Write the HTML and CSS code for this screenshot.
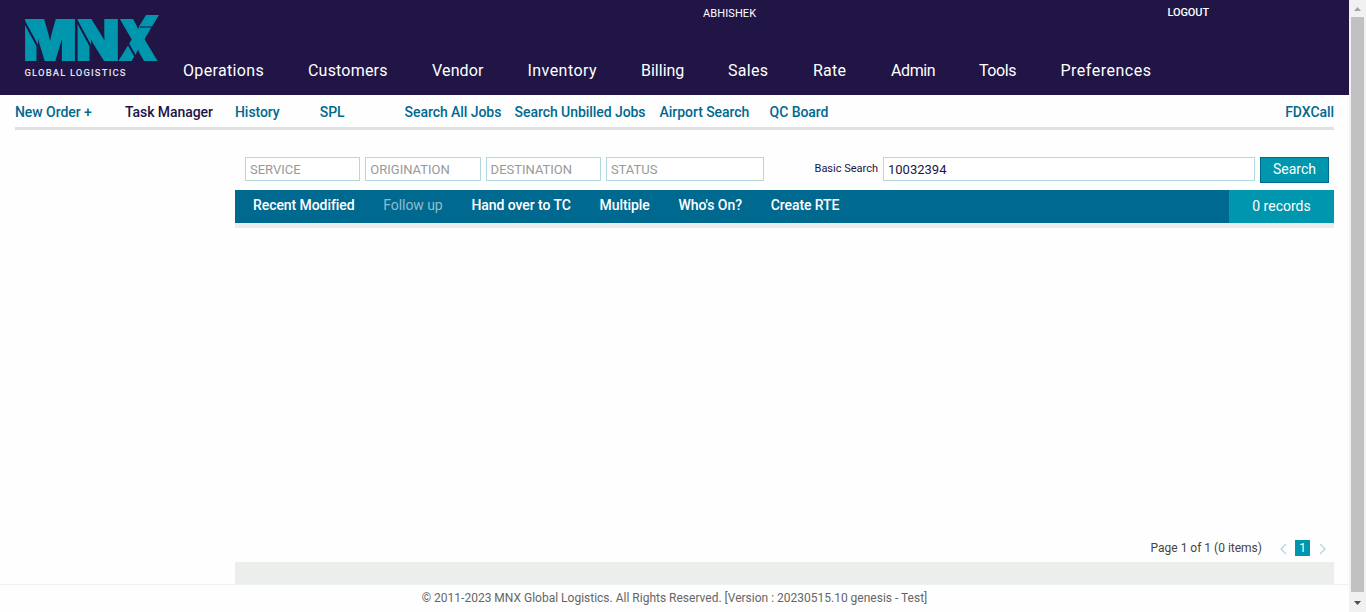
FILE: index.html
```html
<!DOCTYPE html>
<html lang="en">
<head>
<meta charset="utf-8">
<title>MNX Global Logistics - Task Manager</title>
<link rel="stylesheet" href="styles.css">
</head>
<body>
<div class="app">
<div class="page">
  <header class="header">
    <svg class="logo" width="140" height="66" viewBox="0 0 140 66" role="img" aria-label="MNX Global Logistics">
      <text class="logo-name" y="48"><tspan x="-1.5" textLength="53" lengthAdjust="spacingAndGlyphs">M</tspan><tspan x="51" textLength="43.5" lengthAdjust="spacingAndGlyphs">N</tspan><tspan x="94" textLength="38" lengthAdjust="spacingAndGlyphs">X</tspan></text>
      <path class="logo-cut" d="M-1 9L12.5 34V52M52 9L65.500 34V52M101 28L114 51"/>
      <path class="logo-mask" d="M112 4H138V15.500H115Z"/>
      <path class="logo-accent" d="M121 3H134L127 14.500H114Z"/>
      <text class="logo-tag" x="-.5" y="64" textLength="101">GLOBAL LOGISTICS</text>
    </svg>
    <div class="header-main">
      <div class="account"><span class="user">ABHISHEK</span><a class="logout">LOGOUT</a></div>
      <nav class="main-nav">
        <a class="operations">Operations</a><a class="customers">Customers</a><a class="vendor">Vendor</a><a class="inventory">Inventory</a><a class="billing">Billing</a><a class="sales">Sales</a><a class="rate">Rate</a><a class="admin">Admin</a><a class="tools">Tools</a><a class="preferences">Preferences</a>
      </nav>
    </div>
  </header>
  <nav class="sub-nav">
    <a class="wide">New Order +</a><a class="wide current">Task Manager</a><a class="narrow">History</a><a class="narrow">SPL</a><a class="wide">Search All Jobs</a><a class="widest">Search Unbilled Jobs</a><a class="wide">Airport Search</a><a>QC Board</a><a class="fdx">FDXCall</a>
  </nav>
  <main class="content">
    <form class="search">
      <input class="filter" placeholder="SERVICE" aria-label="Service">
      <input class="filter" placeholder="ORIGINATION" aria-label="Origination">
      <input class="filter" placeholder="DESTINATION" aria-label="Destination">
      <input class="filter status" placeholder="STATUS" aria-label="Status">
      <label for="query">Basic Search</label>
      <input class="query" id="query" value="10032394">
      <button type="button">Search</button>
    </form>
    <div class="tabs">
      <a>Recent Modified</a><a class="muted">Follow up</a><a>Hand over to TC</a><a>Multiple</a><a>Who's On?</a><a>Create RTE</a>
      <span class="records">0 records</span>
    </div>
    <div class="results"></div>
    <div class="pager">
      <span>Page 1 of 1 (0 items)</span>
      <svg width="7" height="12" viewBox="0 0 7 12"><path d="M6 1L1 6L6 11"/></svg>
      <b>1</b>
      <svg width="7" height="12" viewBox="0 0 7 12"><path d="M1 1L6 6L1 11"/></svg>
    </div>
    <div class="band"></div>
  </main>
  <footer class="footer"><span>© 2011-2023 MNX Global Logistics. All Rights Reserved. [Version : 20230515.10 genesis - Test]</span></footer>
</div>
<div class="scrollbar">
  <svg width="7" height="4" viewBox="0 0 7 4"><path fill="#a3a3a3" d="M0 4L3.5 0L7 4Z"/></svg>
  <i></i>
  <svg width="7" height="4" viewBox="0 0 7 4"><path fill="#505050" d="M0 0L3.5 4L7 0Z"/></svg>
</div>
</div>
</body>
</html>
```
FILE: styles.css
```css
* { box-sizing: border-box; }
body { margin: 0; font: 14px/16px Roboto, sans-serif; background: #fefefe; color: #201547; overflow: hidden; }
.app { display: flex; width: 1366px; height: 612px; }
.page { width: 1349px; display: flex; flex-direction: column; }

.header { height: 95px; flex: none; background: #201545; color: #fff; display: flex; padding: 12px 0 0 25px; }
.logo { flex: none; width: 140px; overflow: visible; }
.logo-name { font: 900 55px Inter, sans-serif; fill: #0096ae; stroke: #0096ae; stroke-width: 2; }
.logo-cut { fill: none; stroke: #201545; stroke-width: 2; }
.logo-mask { fill: #201545; }
.logo-accent { fill: #0096ae; }
.logo-tag { font: 500 9.5px Roboto, sans-serif; fill: #e6e3ed; }
.header-main { flex: 1; padding-left: 18px; margin-top: -12px; display: flex; flex-direction: column; }
.account { display: flex; height: 61px; padding: 5px 0 0 520px; font-size: 11px; }
.user { width: 464.5px; padding-top: 1px; letter-spacing: .1px; }
.logout { font-weight: 500; letter-spacing: -.1px; }
.main-nav { display: flex; gap: 44px; font-size: 16px; line-height: 20px; white-space: nowrap; }
.operations { width: 81px; letter-spacing: .35px; }
.customers { width: 80px; letter-spacing: .2px; }
.vendor { width: 51.5px; letter-spacing: .15px; }
.inventory { width: 69.5px; letter-spacing: .45px; }
.billing { width: 43px; letter-spacing: 0; }
.sales { width: 41px; letter-spacing: .3px; }
.rate { width: 34px; letter-spacing: .2px; }
.admin { width: 44px; letter-spacing: -.4px; }
.tools { width: 37.5px; letter-spacing: -.4px; }
.preferences { width: 91px; letter-spacing: .5px; }

.sub-nav { display: flex; flex: none; height: 35px; margin: 0 15px; padding-top: 9px; border-bottom: 3px solid #e0e1e0; color: #006990; font-weight: 500; letter-spacing: -.06px; white-space: nowrap; }
.sub-nav .wide { width: 110px; }
.sub-nav .narrow { width: 84.8px; }
.sub-nav .widest { width: 145px; }
.sub-nav .current { color: #201547; }
.fdx { margin-left: auto; }

.content { flex: 1; margin: 0 15px 0 235px; display: flex; flex-direction: column; }
.search { height: 60px; flex: none; padding: 27px 5px 0 10px; display: flex; align-items: flex-start; }
input { height: 24px; border: 1px solid #b2d9e0; border-radius: 0; outline: 0; padding: 1px 4px; margin: 0; background: #fff; color: #201547; font: 13px Roboto, sans-serif; min-width: 0; }
input::placeholder { color: #999; opacity: 1; }
.filter { width: 115.3px; margin-right: 5px; }
.status { width: 158px; margin-right: 0; }
.search label { font-size: 11px; margin: 4px 5px 0 auto; }
.query { width: 372px; margin-right: 5px; }
.search button { width: 69px; height: 26px; border: 1px solid #006990; background: #0096ae; color: #fff; padding: 0 0 2px; font: 14px Roboto, sans-serif; }
.tabs { height: 38px; flex: none; display: flex; gap: 28.8px; padding: 7px 0 0 18px; background: #006990; border-bottom: 5px solid #ededed; color: #fff; font-weight: 500; letter-spacing: -.07px; white-space: nowrap; }
.muted { color: #8fbdce; font-weight: 400; }
.records { width: 105px; height: 33px; margin: -7px 0 0 auto; background: #0096ae; text-align: center; line-height: 32px; font-weight: 400; letter-spacing: 0; }
.results { flex: 1; }
.pager { height: 24px; flex: none; display: flex; justify-content: flex-end; align-items: flex-start; padding-right: 8px; color: #444; font-size: 12px; margin-bottom: -1px; }
.pager span { margin-right: 18px; padding-top: 1px; }
.pager svg { margin-top: 4px; fill: none; stroke: #b5d6df; stroke-width: 1.3; }
.pager b { width: 15px; height: 16px; margin: 1px 9px 0 8px; background: #0096ae; color: #fff; text-align: center; font-weight: 400; line-height: 16px; }
.band { height: 22px; flex: none; background: #eceeeb; }
.footer { height: 28px; flex: none; border-top: 1px solid #edf0f4; text-align: center; font-size: 12px; line-height: 26px; color: #666; }

.scrollbar { width: 17px; background: #f1f1f1; display: flex; flex-direction: column; align-items: center; padding: 7px 0; }
.scrollbar i { flex: 1; width: 13px; margin: 6px 0 9px; background: #c1c1c1; }
```
